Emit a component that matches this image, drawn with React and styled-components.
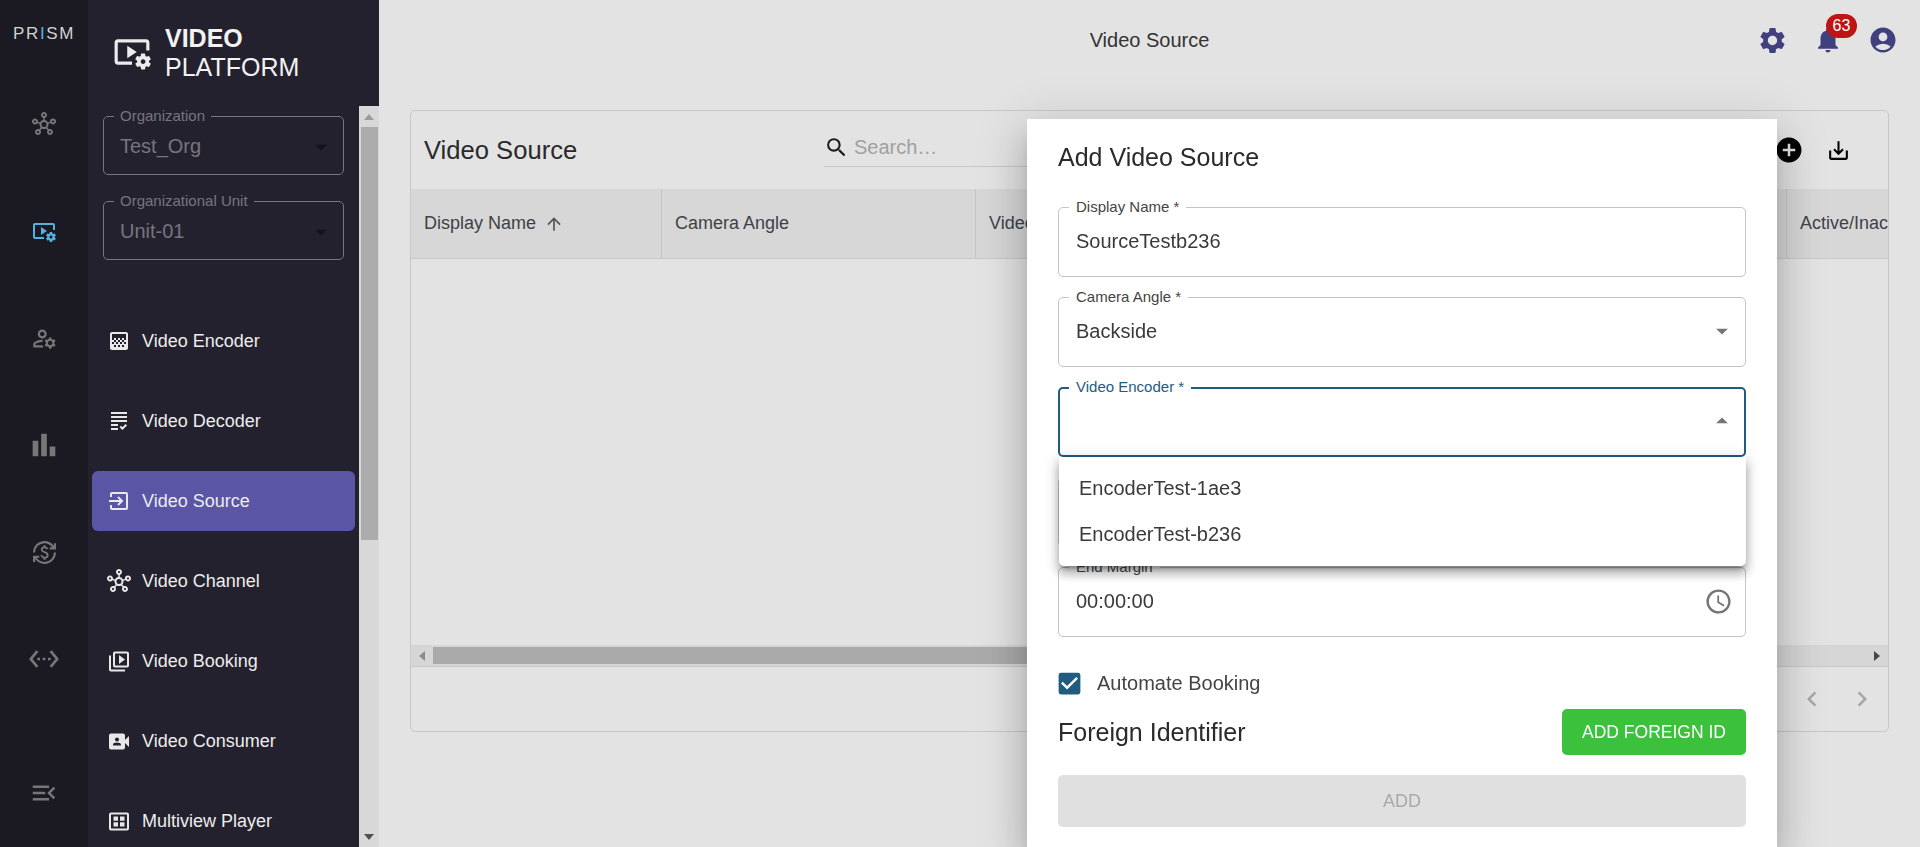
import React from "react";
import styled, { createGlobalStyle } from "styled-components";
import {
    MdOutlineHub,
    MdOutlineVideoSettings,
    MdOutlineManageAccounts,
    MdCurrencyExchange,
    MdSettingsEthernet,
    MdMenuOpen,
    MdGradient,
    MdGrading,
    MdOutlineVideoLibrary,
    MdVideoCameraFront,
    MdSettings,
    MdNotifications,
    MdAccountCircle,
    MdAddCircle,
    MdOutlineSaveAlt,
    MdOutlineAccessTime,
    MdSearch,
    MdArrowUpward,
    MdChevronLeft,
    MdChevronRight,
    MdArrowDropDown,
    MdArrowDropUp,
    MdCheckBox,
} from "react-icons/md";

const GlobalStyle = createGlobalStyle`
    html, body {
        margin: 0;
        height: 100%;
        overflow: hidden;
        background: #e3e3e3;
        font-family: "Liberation Sans", Arial, sans-serif;
    }
    #root {
        height: 100%;
    }
    * {
        box-sizing: border-box;
    }
`;

const BarsIcon = ({ size }) => (
    <svg width={size} height={size} viewBox="0 0 24 24" fill="currentColor">
        <path d="M4 9h4v11H4zm12 4h4v7h-4zm-6-9h4v16h-4z" />
    </svg>
);

const SourceIcon = ({ size }) => (
    <svg width={size} height={size} viewBox="0 0 24 24" fill="none" stroke="currentColor" strokeWidth="2">
        <path d="M4 8V5a1 1 0 0 1 1-1h14a1 1 0 0 1 1 1v14a1 1 0 0 1-1 1H5a1 1 0 0 1-1-1v-3" />
        <path d="M2 12h13M11 8l4 4-4 4" />
    </svg>
);

const MultiviewIcon = ({ size }) => (
    <svg width={size} height={size} viewBox="0 0 24 24" fill="currentColor">
        <path d="M4 3h16a2 2 0 0 1 2 2v14a2 2 0 0 1-2 2H4a2 2 0 0 1-2-2V5a2 2 0 0 1 2-2zm0 2v14h16V5H4z" fillRule="evenodd" />
        <path d="M6.5 7h4.5v4.2H6.5zM13 7h4.500v4.2H13zM6.500 12.800H11V17H6.500zM13 12.800h4.500V17H13z" />
    </svg>
);

const railItems = [
    { Icon: MdOutlineHub, size: 24 },
    { Icon: MdOutlineVideoSettings, size: 24, active: true },
    { Icon: MdOutlineManageAccounts, size: 27 },
    { Icon: BarsIcon, size: 34 },
    { Icon: MdCurrencyExchange, size: 25 },
    { Icon: MdSettingsEthernet, size: 32 },
];

const navItems = [
    { label: "Video Encoder", Icon: MdGradient, size: 24 },
    { label: "Video Decoder", Icon: MdGrading, size: 24 },
    { label: "Video Source", Icon: SourceIcon, size: 24, active: true },
    { label: "Video Channel", Icon: MdOutlineHub, size: 26 },
    { label: "Video Booking", Icon: MdOutlineVideoLibrary, size: 25 },
    { label: "Video Consumer", Icon: MdVideoCameraFront, size: 25 },
    { label: "Multiview Player", Icon: MultiviewIcon, size: 25 },
];

function App() {
    return (
        <Page>
            <GlobalStyle />
            <Rail>
                <Prism>
                    PR<b>I</b>SM
                </Prism>
                <RailList>
                    {railItems.map(({ Icon, size, active }, i) => (
                        <RailIcon key={i} $active={active}>
                            <Icon size={size} />
                        </RailIcon>
                    ))}
                </RailList>
                <RailFoot>
                    <MdMenuOpen size={30} />
                </RailFoot>
            </Rail>

            <Sidebar>
                <Brand>
                    <MdOutlineVideoSettings size={38} />
                    <BrandText>
                        <strong>VIDEO</strong>
                        <span>PLATFORM</span>
                    </BrandText>
                </Brand>
                <SideBody>
                    <SideScroll>
                        <SideSelect>
                            <SideLabel>Organization</SideLabel>
                            <span>Test_Org</span>
                            <MdArrowDropDown size={28} color="#141318" />
                        </SideSelect>
                        <SideSelect>
                            <SideLabel>Organizational Unit</SideLabel>
                            <span>Unit-01</span>
                            <MdArrowDropDown size={28} color="#141318" />
                        </SideSelect>
                        <NavList>
                            {navItems.map(({ label, Icon, size, active }) => (
                                <NavRow key={label} $active={active}>
                                    <NavIcon>
                                        <Icon size={size} />
                                    </NavIcon>
                                    {label}
                                </NavRow>
                            ))}
                        </NavList>
                    </SideScroll>
                    <VScrollbar>
                        <ArrowBox>
                            <Triangle $dir="up" $color="#9b9b9b" />
                        </ArrowBox>
                        <VThumb />
                        <ArrowBox>
                            <Triangle $dir="down" $color="#505050" />
                        </ArrowBox>
                    </VScrollbar>
                </SideBody>
            </Sidebar>

            <Main>
                <TopBar>
                    <span />
                    <PageTitle>Video Source</PageTitle>
                    <TopIcons>
                        <MdSettings size={31} />
                        <BellWrap>
                            <MdNotifications size={30} />
                            <Badge>63</Badge>
                        </BellWrap>
                        <MdAccountCircle size={30} />
                    </TopIcons>
                </TopBar>

                <Card>
                    <CardHead>
                        <CardTitle>Video Source</CardTitle>
                        <SearchBox>
                            <MdSearch size={25} color="#1c1c1c" />
                            <SearchInput placeholder="Search…" readOnly />
                        </SearchBox>
                        <CardActions>
                            <MdAddCircle size={30} color="#000" />
                            <MdOutlineSaveAlt size={25} color="#000" />
                        </CardActions>
                    </CardHead>
                    <HeadRow>
                        <HeadCell $width="251px">
                            Display Name
                            <MdArrowUpward size={20} color="#555" />
                        </HeadCell>
                        <HeadCell $width="314px">Camera Angle</HeadCell>
                        <HeadCell $grow>Video Encoder</HeadCell>
                        <HeadCell $width="101px" $last>
                            Active/Inactive
                        </HeadCell>
                    </HeadRow>
                    <TableBody />
                    <HScrollbar>
                        <ArrowBox $wide>
                            <Triangle $dir="left" $color="#8c8c8c" />
                        </ArrowBox>
                        <HThumb />
                        <ArrowBox $wide>
                            <Triangle $dir="right" $color="#474747" />
                        </ArrowBox>
                    </HScrollbar>
                    <Pager>
                        <MdChevronLeft size={30} />
                        <MdChevronRight size={30} />
                    </Pager>
                </Card>
            </Main>

            <Modal>
                <ModalTitle>Add Video Source</ModalTitle>
                <Fields>
                    <Field>
                        <FieldLabel>Display Name *</FieldLabel>
                        SourceTestb236
                    </Field>
                    <Field>
                        <FieldLabel>Camera Angle *</FieldLabel>
                        Backside
                        <EndIcon>
                            <MdArrowDropDown size={28} />
                        </EndIcon>
                    </Field>
                    <Field $focused>
                        <FieldLabel $focused>Video Encoder *</FieldLabel>
                        <EndIcon>
                            <MdArrowDropUp size={28} />
                        </EndIcon>
                        <Menu>
                            <MenuItem>EncoderTest-1ae3</MenuItem>
                            <MenuItem>EncoderTest-b236</MenuItem>
                        </Menu>
                    </Field>
                    <Field>
                        <FieldLabel>Start Margin</FieldLabel>
                        00:00:00
                    </Field>
                    <Field>
                        <FieldLabel>End Margin</FieldLabel>
                        00:00:00
                        <EndIcon>
                            <ClockIcon size={29} />
                        </EndIcon>
                    </Field>
                </Fields>
                <CheckRow>
                    <MdCheckBox size={29} color="#1f5c80" />
                    Automate Booking
                </CheckRow>
                <ForeignRow>
                    <ForeignTitle>Foreign Identifier</ForeignTitle>
                    <GreenButton>ADD FOREIGN ID</GreenButton>
                </ForeignRow>
                <SubmitButton disabled>ADD</SubmitButton>
            </Modal>
        </Page>
    );
}

const Page = styled.div`
    display: flex;
    height: 100%;
    overflow: hidden;
`;

const Rail = styled.aside`
    flex: none;
    width: 88px;
    height: 100%;
    background: #1b1922;
    display: flex;
    flex-direction: column;
    align-items: center;
`;

const Prism = styled.div`
    margin-top: 24px;
    height: 20px;
    line-height: 20px;
    font-size: 17px;
    letter-spacing: 1.6px;
    color: #d2d2d2;

    b {
        font-weight: normal;
        color: #52b3e0;
    }
`;

const RailList = styled.div`
    margin-top: 60px;
    display: flex;
    flex-direction: column;
    gap: 67px;
`;

const RailIcon = styled.div`
    height: 40px;
    display: flex;
    align-items: center;
    justify-content: center;
    color: ${(p) => (p.$active ? "#52b3e0" : "#777")};
`;

const RailFoot = styled.div`
    margin-top: auto;
    margin-bottom: 39px;
    height: 30px;
    color: #777;
`;

const Sidebar = styled.aside`
    flex: none;
    width: 291px;
    height: 100%;
    background: #24212f;
    display: flex;
    flex-direction: column;
    overflow: hidden;
`;

const Brand = styled.div`
    flex: none;
    height: 106px;
    padding: 24px 0 0 25px;
    display: flex;
    gap: 14px;
    color: #ececec;

    svg {
        margin-top: 9px;
    }
`;

const BrandText = styled.div`
    display: flex;
    flex-direction: column;
    font-size: 25px;
    line-height: 29px;
    color: #f2f2f2;
`;

const SideBody = styled.div`
    flex: 1;
    min-height: 0;
    display: flex;
`;

const SideScroll = styled.div`
    flex: 1;
    min-width: 0;
    overflow: hidden;
    padding: 10px 15px 0;
    display: flex;
    flex-direction: column;
    gap: 26px;
`;

const SideSelect = styled.div`
    position: relative;
    flex: none;
    height: 59px;
    padding: 2px 8px 0 16px;
    border: 1px solid #77757f;
    border-radius: 5px;
    display: flex;
    align-items: center;
    justify-content: space-between;
    font-size: 20px;
    color: #77747f;
`;

const SideLabel = styled.label`
    position: absolute;
    top: -10px;
    left: 10px;
    padding: 0 6px;
    background: #24212f;
    font-size: 15px;
    line-height: 18px;
    color: #77747f;
`;

const NavList = styled.nav`
    flex: none;
    margin: 25px -11px 0;
    display: flex;
    flex-direction: column;
    gap: 20px;
`;

const NavRow = styled.div`
    height: 60px;
    padding-left: 15px;
    border-radius: 6px;
    display: flex;
    align-items: center;
    gap: 11px;
    font-size: 18px;
    color: #ececec;
    background: ${(p) => (p.$active ? "#5b55a5" : "transparent")};
`;

const NavIcon = styled.div`
    flex: none;
    width: 24px;
    display: flex;
    justify-content: center;
    color: #e8e8e8;
`;

const VScrollbar = styled.div`
    flex: none;
    width: 20px;
    background: #d8d8d8;
    display: flex;
    flex-direction: column;
    justify-content: space-between;
`;

const VThumb = styled.div`
    margin: 0 1px 0 2px;
    height: 413px;
    background: #acacac;
    margin-bottom: auto;
`;

const ArrowBox = styled.div`
    flex: none;
    width: ${(p) => (p.$wide ? "22px" : "100%")};
    height: ${(p) => (p.$wide ? "100%" : "21px")};
    display: flex;
    align-items: center;
    justify-content: center;
`;

const triangleBorders = {
    up: "border-width: 0 5px 6px; border-color: transparent transparent COLOR;",
    down: "border-width: 6px 5px 0; border-color: COLOR transparent transparent;",
    left: "border-width: 5px 6px 5px 0; border-color: transparent COLOR transparent transparent;",
    right: "border-width: 5px 0 5px 6px; border-color: transparent transparent transparent COLOR;",
};

const Triangle = styled.i`
    width: 0;
    height: 0;
    border-style: solid;
    ${(p) => triangleBorders[p.$dir].replace("COLOR", p.$color)}
`;

const Main = styled.main`
    flex: 1;
    min-width: 0;
    height: 100%;
    padding: 0 31px;
    display: flex;
    flex-direction: column;
`;

const TopBar = styled.header`
    flex: none;
    height: 80px;
    margin: 0 -31px 30px;
    padding: 0 22px;
    display: grid;
    grid-template-columns: 1fr auto 1fr;
    align-items: center;
`;

const PageTitle = styled.div`
    font-size: 20px;
    color: #333;
`;

const TopIcons = styled.div`
    justify-self: end;
    display: flex;
    align-items: center;
    gap: 25px;
    color: #40407f;
`;

const BellWrap = styled.div`
    position: relative;
    display: flex;
`;

const Badge = styled.span`
    position: absolute;
    top: -11px;
    left: 13px;
    width: 31px;
    height: 24px;
    border-radius: 12px;
    background: #c01414;
    color: #fff;
    font-size: 16px;
    line-height: 24px;
    text-align: center;
`;

const Card = styled.section`
    flex: none;
    height: 622px;
    border: 1px solid #c8c8c8;
    border-radius: 5px;
    display: flex;
    flex-direction: column;
    overflow: hidden;
`;

const CardHead = styled.div`
    flex: none;
    height: 78px;
    padding: 0 37px 0 13px;
    display: flex;
    align-items: center;
`;

const CardTitle = styled.h2`
    margin: 0;
    width: 400px;
    font-size: 25.6px;
    font-weight: normal;
    color: #2a2a2a;
`;

const SearchBox = styled.div`
    width: 500px;
    height: 39px;
    margin-top: -5px;
    display: flex;
    align-items: center;
    gap: 3px;
    border-bottom: 1px solid #c8c8c8;
`;

const SearchInput = styled.input`
    flex: 1;
    border: 0;
    outline: 0;
    background: transparent;
    font: 20px "Liberation Sans", Arial, sans-serif;

    &::placeholder {
        color: #a0a0a0;
        opacity: 1;
    }
`;

const CardActions = styled.div`
    margin-left: auto;
    display: flex;
    align-items: center;
    gap: 22px;
`;

const HeadRow = styled.div`
    flex: none;
    height: 70px;
    background: #d7d7d7;
    border-bottom: 1px solid #c8c8c8;
    display: flex;
`;

const HeadCell = styled.div`
    flex: ${(p) => (p.$grow ? 1 : "none")};
    width: ${(p) => p.$width || "auto"};
    padding-left: 13px;
    border-right: ${(p) => (p.$last ? "0" : "1px solid #c5c5c5")};
    display: flex;
    align-items: center;
    gap: 8px;
    overflow: hidden;
    white-space: nowrap;
    font-size: 18px;
    color: #3d4247;
`;

const TableBody = styled.div`
    flex: 1;
`;

const HScrollbar = styled.div`
    flex: none;
    height: 22px;
    background: #d6d6d6;
    border-bottom: 1px solid #c8c8c8;
    display: flex;
    justify-content: space-between;
`;

const HThumb = styled.div`
    width: 900px;
    height: 17px;
    margin-top: 2px;
    margin-right: auto;
    background: #aaa;
`;

const Pager = styled.div`
    flex: none;
    height: 64px;
    padding-right: 11px;
    display: flex;
    align-items: center;
    justify-content: flex-end;
    gap: 20px;
    color: #a6a6a6;
`;

const Modal = styled.div`
    position: fixed;
    top: 119px;
    left: 1027px;
    width: 750px;
    bottom: 0;
    padding: 19px 31px 0;
    background: #fff;
    box-shadow: 0 11px 15px -7px rgba(0, 0, 0, 0.2), 0 24px 38px 3px rgba(0, 0, 0, 0.14), 0 9px 46px 8px rgba(0, 0, 0, 0.12);
`;

const ModalTitle = styled.h2`
    margin: 0 0 31px;
    height: 38px;
    line-height: 38px;
    font-size: 25px;
    font-weight: normal;
    color: #2a2a2a;
`;

const Fields = styled.div`
    display: flex;
    flex-direction: column;
    gap: 20px;
`;

const Field = styled.div`
    position: relative;
    height: 70px;
    padding: 0 ${(p) => (p.$focused ? "8px" : "9px")} 2px ${(p) => (p.$focused ? "16px" : "17px")};
    border: ${(p) => (p.$focused ? "2px solid #1f5c80" : "1px solid #c4c4c4")};
    border-radius: 5px;
    display: flex;
    align-items: center;
    font-size: 20px;
    color: #3a3a3a;
`;

const FieldLabel = styled.label`
    position: absolute;
    top: ${(p) => (p.$focused ? "-11px" : "-10px")};
    left: ${(p) => (p.$focused ? "9px" : "10px")};
    padding: 0 7px;
    background: #fff;
    font-size: 15px;
    line-height: 18px;
    color: ${(p) => (p.$focused ? "#1f5c80" : "#444")};
`;

const EndIcon = styled.div`
    margin-left: auto;
    display: flex;
    color: #757575;
`;

const ClockIcon = styled(MdOutlineAccessTime)`
    margin-right: 3px;
`;

const Menu = styled.div`
    position: absolute;
    z-index: 2;
    top: calc(100% + 2px);
    left: -1px;
    right: -2px;
    padding: 8px 0 9px;
    border-radius: 0 0 5px 5px;
    background: #fff;
    box-shadow: 0 5px 5px -3px rgba(0, 0, 0, 0.35), 0 8px 10px 1px rgba(0, 0, 0, 0.2), 0 3px 14px 2px rgba(0, 0, 0, 0.16);
`;

const MenuItem = styled.div`
    height: 46px;
    padding-left: 20px;
    display: flex;
    align-items: center;
    font-size: 20px;
    color: #3a3a3a;
`;

const CheckRow = styled.div`
    height: 22px;
    margin-top: 35px;
    margin-left: -3px;
    display: flex;
    align-items: center;
    gap: 13px;
    font-size: 20px;
    color: #444;
`;

const ForeignRow = styled.div`
    height: 46px;
    margin-top: 15px;
    display: flex;
    align-items: center;
    justify-content: space-between;
`;

const ForeignTitle = styled.div`
    font-size: 25px;
    color: #2a2a2a;
`;

const GreenButton = styled.button`
    width: 184px;
    height: 46px;
    border: 0;
    border-radius: 5px;
    background: #3cc13c;
    color: #fff;
    font: 17.5px "Liberation Sans", Arial, sans-serif;
`;

const SubmitButton = styled.button`
    display: block;
    width: 100%;
    height: 52px;
    margin-top: 20px;
    border: 0;
    border-radius: 5px;
    background: #e0e0e0;
    color: #a9a9a9;
    font: 18px "Liberation Sans", Arial, sans-serif;
`;

export default App;
